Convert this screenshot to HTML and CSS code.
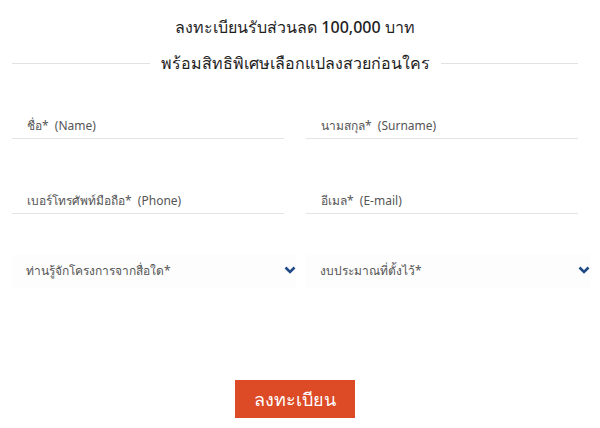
FILE: index.html
```html
<!DOCTYPE html>
<html lang="th">
<head>
    <meta charset="UTF-8">
    <meta name="viewport" content="width=device-width, initial-scale=1.0">
    <title>ลงทะเบียน</title>
    <link rel="stylesheet" href="styles.css">
</head>
<body>
    <div class="container">
        <h2 class="title">ลงทะเบียนรับส่วนลด 100,000 บาท</h2>
        <div class="subtitle">
            <span class="rule"></span>
            <span class="subtitle-text">พร้อมสิทธิพิเศษเลือกแปลงสวยก่อนใคร</span>
            <span class="rule"></span>
        </div>

        <form class="form">
            <div class="field">
                <input type="text" placeholder="ชื่อ*  (Name)">
            </div>
            <div class="field">
                <input type="text" placeholder="นามสกุล*  (Surname)">
            </div>
            <div class="field">
                <input type="text" placeholder="เบอร์โทรศัพท์มือถือ*  (Phone)">
            </div>
            <div class="field">
                <input type="text" placeholder="อีเมล*  (E-mail)">
            </div>
            <div class="field select-field">
                <select>
                    <option value="">ท่านรู้จักโครงการจากสื่อใด*</option>
                </select>
                <svg class="chevron" width="12" height="8" viewBox="0 0 12 8"><path d="M1.5 1.5 L6 6 L10.5 1.5" fill="none" stroke="#1f4a87" stroke-width="2.6"/></svg>
            </div>
            <div class="field select-field">
                <select>
                    <option value="">งบประมาณที่ตั้งไว้*</option>
                </select>
                <svg class="chevron" width="12" height="8" viewBox="0 0 12 8"><path d="M1.5 1.5 L6 6 L10.5 1.5" fill="none" stroke="#1f4a87" stroke-width="2.6"/></svg>
            </div>
        </form>

        <div class="actions">
            <button type="button">ลงทะเบียน</button>
        </div>
    </div>
</body>
</html>
```

FILE: styles.css
```css
body {
    margin: 0;
    padding: 0;
    background: #fff;
    font-family: "Noto Sans", "DejaVu Sans", sans-serif;
    color: #222;
}
.container {
    width: 600px;
    padding: 14px 22px 0 12px;
    box-sizing: border-box;
}
.title {
    margin: 0;
    text-align: center;
    font-size: 16px;
    font-weight: 500;
    line-height: 26px;
    color: #1e1e1e;
}
.subtitle {
    display: flex;
    align-items: center;
    gap: 11px;
    margin-top: 10px;
}
.rule {
    flex: 1;
    height: 1px;
    background: #e2e2e2;
}
.subtitle-text {
    font-size: 16px;
    font-weight: 500;
    line-height: 26px;
    color: #1e1e1e;
}
.form {
    display: grid;
    grid-template-columns: 1fr 1fr;
    column-gap: 22px;
    row-gap: 49px;
    margin-top: 37px;
}
.field {
    position: relative;
}
.field input {
    width: 100%;
    box-sizing: border-box;
    border: none;
    border-bottom: 1px solid #e4e4e4;
    padding: 4px 15px 4px;
    font-family: inherit;
    font-size: 12px;
    color: #555;
    outline: none;
}
.field input::placeholder {
    color: #555;
}
.select-field {
    margin-top: -8px;
    margin-right: -12px;
}
.field select {
    width: 100%;
    -webkit-appearance: none;
    appearance: none;
    border: none;
    background: #fdfdfd;
    padding: 7px 14px 9px;
    font-family: inherit;
    font-size: 12px;
    color: #555;
    outline: none;
}
.chevron {
    position: absolute;
    right: 0;
    top: 11px;
}
.actions {
    display: flex;
    justify-content: center;
    margin-top: 92px;
}
button {
    width: 120px;
    height: 38px;
    border: none;
    background: #dc4a26;
    color: #fff;
    font-family: inherit;
    font-size: 18px;
    cursor: pointer;
}
```
